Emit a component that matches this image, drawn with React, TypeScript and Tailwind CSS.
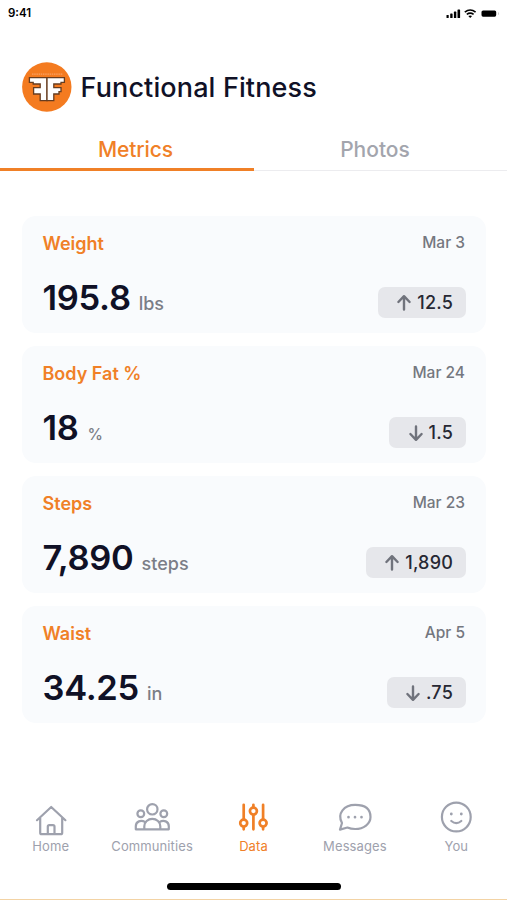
import type { ReactNode } from "react";
import { clsx } from "clsx";

type Metric = {
  label: string;
  date: string;
  value: string;
  unit: string;
  delta: string;
  up: boolean;
};

const metrics: Metric[] = [
  { label: "Weight", date: "Mar 3", value: "195.8", unit: "lbs", delta: "12.5", up: true },
  { label: "Body Fat %", date: "Mar 24", value: "18", unit: "%", delta: "1.5", up: false },
  { label: "Steps", date: "Mar 23", value: "7,890", unit: "steps", delta: "1,890", up: true },
  { label: "Waist", date: "Apr 5", value: "34.25", unit: "in", delta: ".75", up: false },
];

function StatusBar() {
  return (
    <div className="flex h-[26px] items-center justify-between pl-[8px] pr-[8px]">
      <span className="pt-[2px] text-[11.5px] font-semibold text-black">9:41</span>
      <svg width="54" height="12" viewBox="0 0 54 12" fill="#000">
        <rect x="1.5" y="8" width="2.2" height="3" rx=".6" />
        <rect x="5.2" y="6.4" width="2.4" height="4.6" rx=".6" />
        <rect x="8.9" y="4.6" width="2.4" height="6.4" rx=".6" />
        <rect x="12.5" y="2.5" width="2.6" height="8.5" rx=".6" />
        <g fill="none" stroke="#000" strokeWidth="1.7">
          <path d="M19.8 5.1 Q25.2 0.9 30.6 5.1" />
          <path d="M21.8 7.4 Q25.2 4.9 28.6 7.4" />
        </g>
        <path d="M23.3 9 Q25.2 7.8 27.1 9 L25.2 11 Z" />
        <rect x="36.5" y="3.5" width="14.7" height="6.2" rx="1.6" />
        <rect x="53" y="5.5" width="1" height="2.2" fill="#ccc" />
      </svg>
    </div>
  );
}

function Logo() {
  return (
    <svg width="50" height="50" viewBox="0 0 50 50" className="shrink-0">
      <circle cx="24.8" cy="25" r="24.7" fill="#f47b20" />
      <path d="M10 12.2H41" stroke="#f9a062" strokeWidth="1.2" strokeDasharray="1.5 .7" />
      <g fill="#fff" stroke="#673d20" strokeWidth="1.3" strokeLinejoin="miter">
        <path d="M7.4 15.6H25V38.7H18.2V32H11.6V25.6H18.2V22H11.2V20.4H7.4Z" />
        <path d="M25 15.6H42.4V20.4H39V22H31.8V25.6H39V29.6H37V32H31.8V38.7H25Z" />
      </g>
    </svg>
  );
}

function Arrow({ up }: { up: boolean }) {
  return (
    <svg
      width="16"
      height="18"
      viewBox="0 0 16 18"
      fill="none"
      stroke="#70737c"
      strokeWidth="2.4"
      strokeLinecap="round"
      strokeLinejoin="round"
      className={clsx(!up && "rotate-180")}
    >
      <path d="M8 15.6V2.4M2.4 8 8 2.2 13.6 8" />
    </svg>
  );
}

function MetricCard({ label, date, value, unit, delta, up }: Metric) {
  return (
    <section className="flex h-[117px] justify-between rounded-[14px] bg-[#f9fbfd] pl-[20.5px] pr-[20px]">
      <div className="flex flex-col pt-[16px]">
        <h2 className="h-6 text-[18px] leading-6 font-semibold text-[#f08027]">{label}</h2>
        <p className="mt-[20px] flex h-[44px] items-baseline gap-[8px] leading-[44px]">
          <span className="text-[34.5px] font-semibold tracking-[-0.3px] text-[#101126]">{value}</span>
          <span className={clsx("font-medium text-[#7b7e87]", unit === "%" ? "pl-[1px] text-[15.5px]" : "text-[18px]")}>
            {unit}
          </span>
        </p>
      </div>
      <div className="flex flex-col items-end pt-[17px]">
        <span className="h-5 pr-[1px] text-[15.5px] leading-5 font-medium text-[#74777f]">{date}</span>
        <span className="mt-[34px] flex h-[31px] items-center gap-[5px] rounded-[7px] bg-[#e6e7eb] pl-[18.5px] pr-[13px] text-[18px] font-medium tracking-[0.2px] text-[#262833]">
          <Arrow up={up} />
          {delta}
        </span>
      </div>
    </section>
  );
}

function NavItem({ label, active, children }: { label: string; active?: boolean; children: ReactNode }) {
  return (
    <a className={clsx("flex flex-col items-center", active ? "text-[#f08027]" : "text-[#9ea1ad]")}>
      <svg
        width="40"
        height="36"
        viewBox="0 0 40 36"
        fill="none"
        stroke="currentColor"
        strokeWidth="2.2"
        strokeLinecap="round"
        strokeLinejoin="round"
      >
        {children}
      </svg>
      <span className="mt-[-1px] text-[13px] leading-5 tracking-[0.1px]">{label}</span>
    </a>
  );
}

export default function App() {
  return (
    <main className="flex h-[900px] w-[507px] flex-col overflow-hidden bg-white font-['Inter',sans-serif]">
      <StatusBar />
      <header className="mt-[36px] flex h-[50px] items-center gap-[8.5px] pl-[22px]">
        <Logo />
        <h1 className="pt-[2px] text-[27px] font-medium tracking-[0.13px] text-[#101126]">Functional Fitness</h1>
      </header>
      <nav className="mt-[20px] flex h-[39px] text-[21px] font-medium">
        <div className="flex w-[254px] justify-center border-b-[3px] border-[#f08027] pl-[17px] leading-[35px] tracking-[-0.1px] text-[#f08027]">
          Metrics
        </div>
        <div className="flex flex-1 justify-center border-b border-[#ececef] pr-[11px] leading-[35px] text-[#a3a5ad]">
          Photos
        </div>
      </nav>
      <div className="mt-[45px] flex flex-col gap-[13px] pr-[21px] pl-[22px]">
        {metrics.map((m) => (
          <MetricCard key={m.label} {...m} />
        ))}
      </div>
      <nav className="mt-auto grid h-[82px] grid-cols-5">
        <NavItem label="Home">
          <path d="M6 19.2 20.2 6 34.4 19.2M9.2 17V31.7Q9.2 33.2 10.7 33.2H29.7Q31.2 33.2 31.2 31.7V17M16.8 33.2V25.6Q16.8 24.1 18.3 24.1H22Q23.5 24.1 23.5 25.6V33.2" />
        </NavItem>
        <NavItem label="Communities">
          <circle cx="20.3" cy="8.3" r="5.2" />
          <circle cx="8.8" cy="12.8" r="3.4" />
          <circle cx="31.8" cy="12.8" r="3.4" />
          <path d="M12.3 28.3V25.3A8 7.5 0 0 1 28.3 25.3V28.3ZM12.3 28.3H3.8V25.3C3.8 20.3 8.8 18.6 13.3 21.1M28.3 28.3H36.8V25.3C36.8 20.3 31.8 18.6 27.3 21.1" />
        </NavItem>
        <NavItem label="Data" active>
          <g strokeWidth="2.7" transform="translate(.4 -.2)">
            <path d="M10.3 4V18.7M10.3 26.3V28.5M20 4V6.7M20 14.3V28.5M29.7 4V18.7M29.7 26.3V28.5" />
            <circle cx="10.3" cy="22.3" r="3.5" />
            <circle cx="20" cy="10.3" r="3.5" />
            <circle cx="29.7" cy="22.3" r="3.5" />
          </g>
        </NavItem>
        <NavItem label="Messages">
          <path d="M5 28.6 7 22C1.7 12.3 9.2 3.9 20.2 3.9S35.5 9.2 35.5 16 28.7 28 20.2 28Q15.7 28 12.4 26.5Z" />
          <path d="M13.5 16.2h.01M20 16.2h.01M26.5 16.2h.01" strokeWidth="2.7" />
        </NavItem>
        <NavItem label="You">
          <circle cx="20.3" cy="16" r="14.4" />
          <path d="M15.3 13h.01M25.3 13h.01" strokeWidth="2.8" />
          <path d="M15.3 20Q20.3 24.3 25.3 20" />
        </NavItem>
      </nav>
      <div className="h-[7px] w-[174px] shrink-0 self-center rounded-full bg-black" />
      <div className="mt-[9px] h-px shrink-0 bg-[#f3d3a4]" />
    </main>
  );
}
